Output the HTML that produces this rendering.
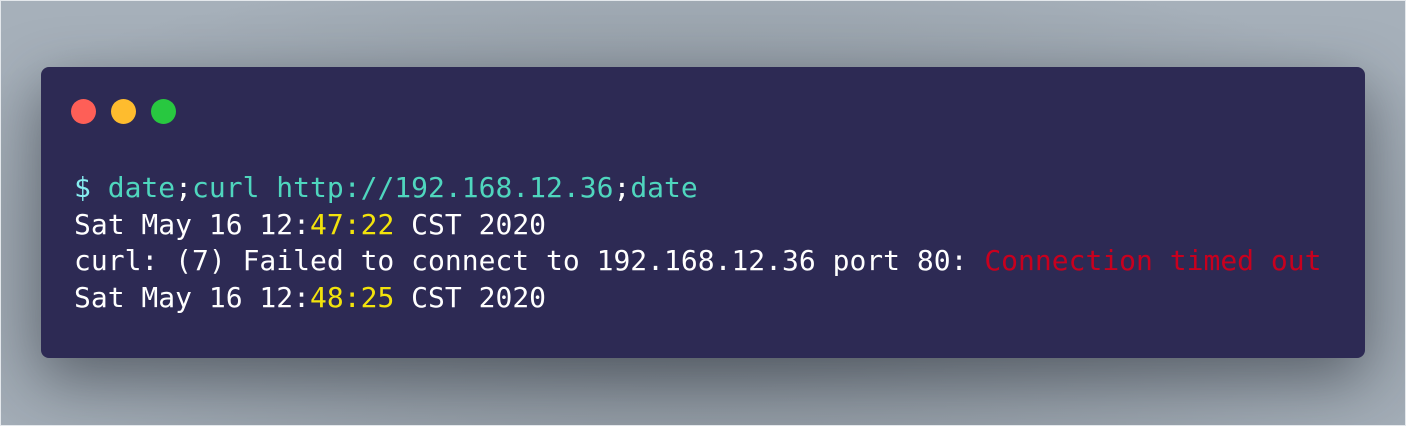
<!DOCTYPE html>
<html><head><meta charset="utf-8"><style>
html,body{margin:0;padding:0}
body{width:1406px;height:426px;overflow:hidden;position:relative;
background:radial-gradient(ellipse 900px 300px at 703px 260px,#6f7880 0%,#8d969f 45%,#a6b0ba 100%);}
.frame{position:absolute;inset:0;border:1px solid #e4e8ec;box-sizing:border-box;pointer-events:none}
.win{position:absolute;left:41px;top:67px;width:1324px;height:291px;background:#2d2a54;border-radius:8px;
box-shadow:0 20px 60px rgba(40,45,55,0.55);}
.dot{position:absolute;top:99px;width:25px;height:25px;border-radius:50%}
pre{position:absolute;left:74px;top:170px;margin:0;font-family:"DejaVu Sans Mono","Liberation Mono",monospace;
font-size:28px;line-height:36.5px;color:#ffffff;white-space:pre}
.c{color:#4fd6be}.p{color:#86eef0}.y{color:#f2e30c}.r{color:#c8001e}
</style></head><body>
<div class="win"></div>
<div class="dot" style="left:71px;background:#fe5f57"></div>
<div class="dot" style="left:111px;background:#febc2e"></div>
<div class="dot" style="left:151px;background:#28c840"></div>
<pre><span class="p">$</span> <span class="c">date</span>;<span class="c">curl http://192.168.12.36</span>;<span class="c">date</span>
Sat May 16 12:<span class="y">47:22</span> CST 2020
curl: (7) Failed to connect to 192.168.12.36 port 80: <span class="r">Connection timed out</span>
Sat May 16 12:<span class="y">48:25</span> CST 2020</pre>
<div class="frame"></div>
</body></html>
